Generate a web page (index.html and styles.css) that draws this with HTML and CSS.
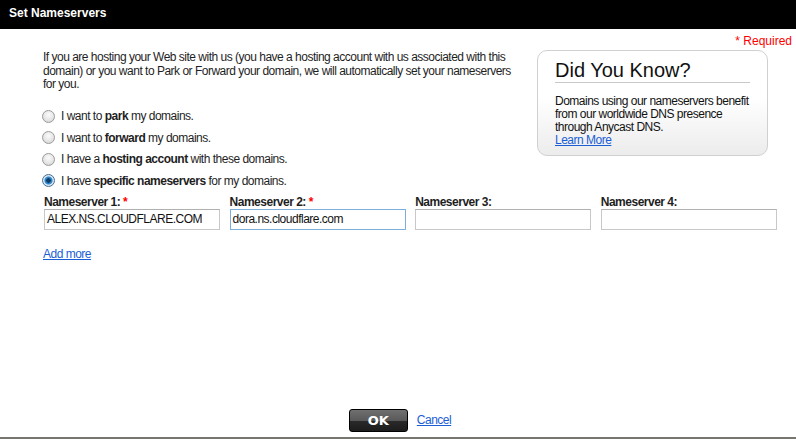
FILE: index.html
```html
<!DOCTYPE html>
<html>
<head>
<meta charset="utf-8">
<link rel="stylesheet" href="styles.css">
</head>
<body>
<div class="dialog">
  <div class="titlebar">Set Nameservers</div>
  <div class="content">
    <div class="required"><span class="star">*</span> Required</div>
    <div class="top">
      <div class="left">
        <p class="intro">If you are hosting your Web site with us (you have a hosting account with us associated with this domain) or you want to Park or Forward your domain, we will automatically set your nameservers for you.</p>
        <ul class="options">
          <li><input type="radio" name="opt" class="radio"><span>I want to <b>park</b> my domains.</span></li>
          <li><input type="radio" name="opt" class="radio"><span>I want to <b>forward</b> my domains.</span></li>
          <li><input type="radio" name="opt" class="radio"><span>I have a <b>hosting account</b> with these domains.</span></li>
          <li><input type="radio" name="opt" class="radio" checked><span>I have <b>specific nameservers</b> for my domains.</span></li>
        </ul>
      </div>
      <div class="dyk">
        <div class="dyk-title">Did You Know?</div>
        <div class="dyk-body">Domains using our nameservers benefit from our worldwide DNS presence through Anycast DNS.<br><a href="#" class="link">Learn More</a></div>
      </div>
    </div>
    <div class="ns-grid">
      <div class="ns-field">
        <label>Nameserver 1: <span class="star">*</span></label>
        <div class="input">ALEX.NS.CLOUDFLARE.COM</div>
      </div>
      <div class="ns-field">
        <label>Nameserver 2: <span class="star">*</span></label>
        <div class="input focus">dora.ns.cloudflare.com</div>
      </div>
      <div class="ns-field">
        <label>Nameserver 3:</label>
        <div class="input"></div>
      </div>
      <div class="ns-field">
        <label>Nameserver 4:</label>
        <div class="input"></div>
      </div>
    </div>
    <a href="#" class="link addmore">Add more</a>
  </div>
  <div class="footer">
    <button class="ok">OK</button>
    <a href="#" class="link">Cancel</a>
  </div>
</div>
</body>
</html>
```
FILE: styles.css
```css
* { box-sizing: border-box; }
html, body { margin: 0; padding: 0; background: #fff; }
body {
  font-family: "Liberation Sans", Arial, sans-serif;
  font-size: 12px;
  letter-spacing: -0.5px;
  color: #1e1e1e;
}
.dialog {
  height: 439px;
  display: flex;
  flex-direction: column;
  border-bottom: 2px solid #76766e;
}
.titlebar {
  background: #000;
  color: #fff;
  font-weight: bold;
  font-size: 12px;
  letter-spacing: 0;
  height: 29px;
  line-height: 27px;
  padding-left: 9px;
}
.content {
  flex: 1;
  padding: 5px 4px 0 43px;
}
.required {
  text-align: right;
  color: #f00;
  font-size: 12px;
  letter-spacing: 0;
  line-height: 14px;
}
.star { color: #f00; }
.top {
  display: flex;
  justify-content: space-between;
  padding-right: 24px;
}
.left { width: 480px; }
.intro {
  margin: 3px 0 0 0;
  line-height: 13.5px;
  width: 475px;
}
.options {
  list-style: none;
  margin: 13.75px 0 0 -1px;
  padding: 0;
}
.options li {
  display: flex;
  align-items: center;
  height: 21.5px;
}
.options b { font-weight: bold; }
.radio {
  appearance: none;
  -webkit-appearance: none;
  width: 13px;
  height: 13px;
  margin: 0 6px 0 0;
  border-radius: 50%;
  border: 1px solid #9a9a9a;
  background: radial-gradient(circle at 50% 35%, #fbfbfb 0%, #e6e6e6 55%, #cfcfcf 100%);
}
.radio:checked {
  border-color: #4a6f8f;
  background: radial-gradient(circle at 50% 50%, #0c3d66 0 2px, #2d83c8 2.5px 3.5px, #d6e7f5 4.5px, #c6d8e6 100%);
}
.dyk {
  width: 231px;
  height: 106px;
  margin-top: 2px;
  border: 1px solid #d0d0d0;
  border-radius: 10px;
  background: linear-gradient(#ffffff 0%, #ffffff 45%, #ececec 100%);
  padding: 7px 15px 0 17px;
}
.dyk-title {
  font-size: 20px;
  letter-spacing: 0;
  color: #111;
  line-height: 24px;
  margin-right: 2px;
  border-bottom: 1px solid #c8c8c8;
}
.dyk-body {
  margin-top: 12px;
  line-height: 13px;
  color: #111;
}
.link { color: #1a5ed6; text-decoration: underline; }
.ns-grid {
  display: grid;
  grid-template-columns: repeat(4, 176px);
  column-gap: 9.6px;
  margin-top: 4px;
  margin-left: 1px;
}
.ns-field label {
  display: block;
  font-weight: bold;
  line-height: 14px;
}
.input {
  height: 21px;
  border: 1px solid #c8c8c8;
  border-top-color: #b0b0b0;
  padding: 2px 0 0 2px;
  line-height: 15px;
  color: #111;
  background: #fff;
}
.input.focus { border-color: #7eaedb; }
.addmore {
  display: inline-block;
  margin-top: 17px;
}
.footer {
  height: 37px;
  display: flex;
  justify-content: center;
  align-items: flex-start;
  gap: 9px;
  padding: 9px 0 0 4px;
}
.footer .link { line-height: 20px; margin-top: 1px; }
.ok {
  width: 59px;
  height: 23px;
  border: 1px solid #000;
  border-radius: 3px;
  background: linear-gradient(#707070 0%, #595959 50%, #2a2a2a 50%, #1c1c1c 100%);
  color: #fff;
  font-family: "DejaVu Sans", "Liberation Sans", sans-serif;
  font-weight: bold;
  font-size: 13px;
  letter-spacing: 0;
  padding: 0;
  line-height: 21px;
}
```
